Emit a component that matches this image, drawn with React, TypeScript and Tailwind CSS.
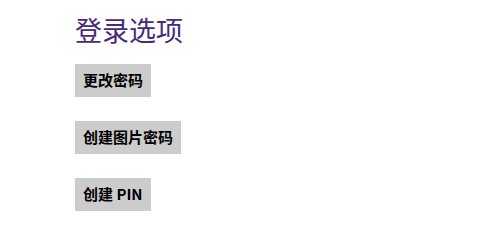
export default function App() {
  const options = ["更改密码", "创建图片密码", "创建 PIN"];

  return (
    <div className="h-[239px] w-[497px] bg-white pl-[75px] pt-[13px] font-['Noto_Sans_CJK_SC',sans-serif]">
      {/* Title */}
      <h1 className="text-[27px] leading-[34px] font-normal text-[#48297a]">
        登录选项
      </h1>

      {/* Options */}
      <div className="mt-[17px] flex flex-col items-start gap-[24px]">
        {options.map((label) => (
          <button
            key={label}
            type="button"
            className="h-[33px] bg-[#cccccc] px-[8px] text-[15px] font-bold text-black"
          >
            {label}
          </button>
        ))}
      </div>
    </div>
  );
}
